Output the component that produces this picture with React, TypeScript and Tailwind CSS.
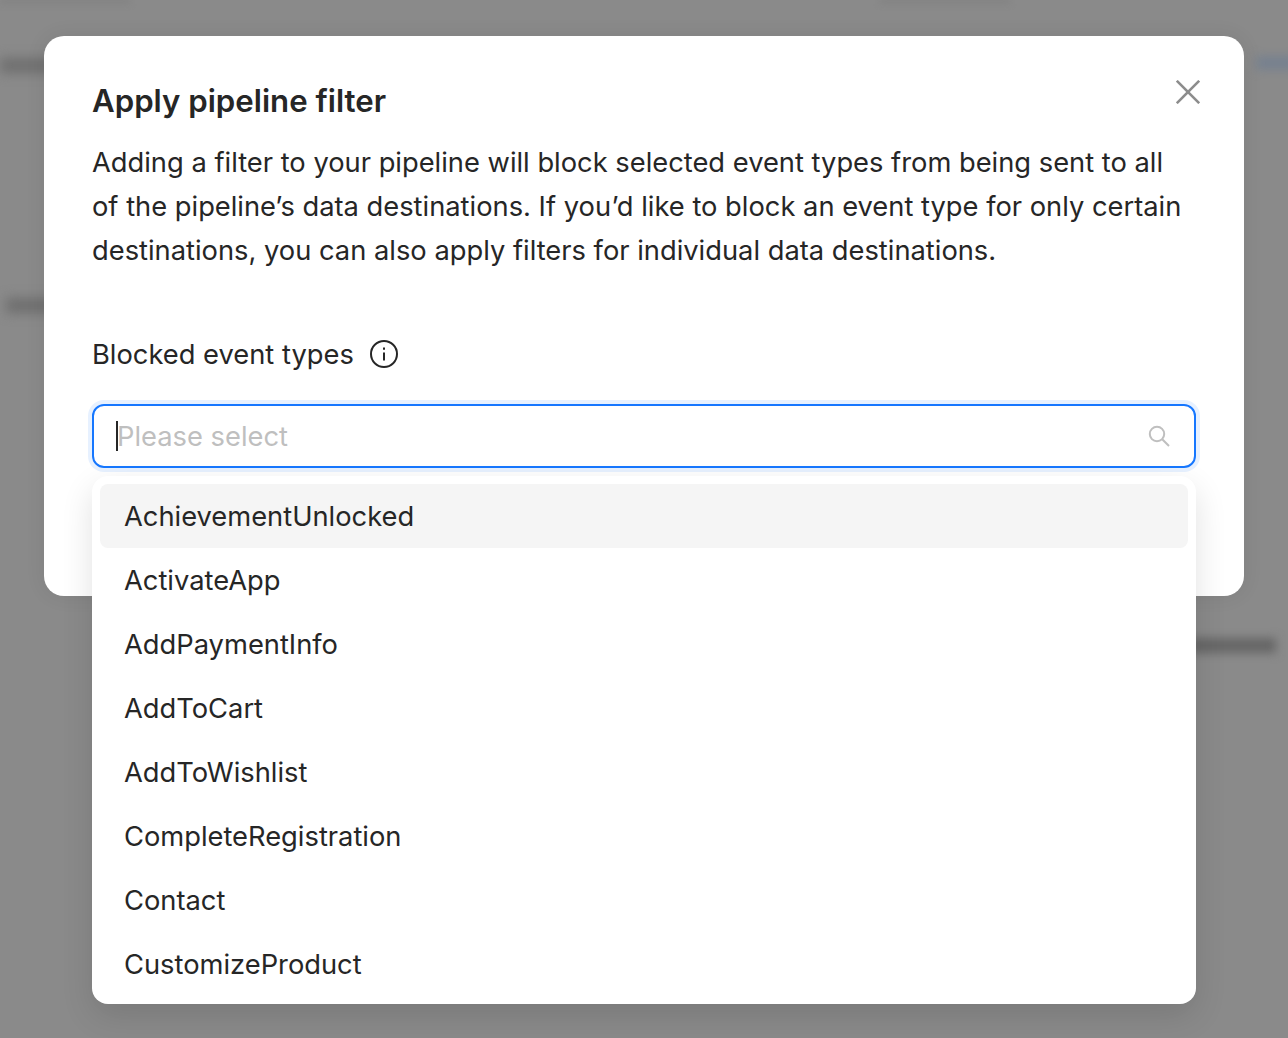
const OPTIONS = [
  "AchievementUnlocked",
  "ActivateApp",
  "AddPaymentInfo",
  "AddToCart",
  "AddToWishlist",
  "CompleteRegistration",
  "Contact",
  "CustomizeProduct",
];

function Backdrop() {
  return (
    <div className="absolute inset-0 overflow-hidden bg-[#8a8a8a]">
      <div className="absolute left-0 top-[58px] h-[15px] w-[60px] bg-[#6f6f6f] blur-[6px]" />
      <div className="absolute left-[6px] top-[298px] h-[15px] w-[60px] bg-[#6e6e6e] blur-[6px]" />
      <div className="absolute left-[1256px] top-[56px] h-[14px] w-[40px] bg-[#77818f] blur-[5px]" />
      <div className="absolute left-[1190px] top-[638px] h-[15px] w-[86px] bg-[#666666] blur-[5px]" />
      <div className="absolute left-0 top-0 h-[3px] w-[130px] bg-[#7e7e7e] blur-[3px]" />
      <div className="absolute left-[880px] top-0 h-[3px] w-[130px] bg-[#7e7e7e] blur-[3px]" />
    </div>
  );
}

function CloseIcon() {
  return (
    <svg width="24" height="24" viewBox="0 0 24 24" fill="none" stroke="#8c8c8c" strokeWidth="2.6">
      <path d="M0.8 0.8L23.2 23.2" />
      <path d="M23.2 0.8L0.8 23.2" />
    </svg>
  );
}

function InfoIcon() {
  return (
    <svg width="28" height="28" viewBox="0 0 28 28" fill="none" stroke="#262626" strokeWidth="2">
      <circle cx="14" cy="14" r="13" />
      <path d="M14 12.5v8" />
      <path d="M14 7.5v2.2" />
    </svg>
  );
}

function SearchIcon() {
  return (
    <svg width="22" height="22" viewBox="0 0 22 22" fill="none" stroke="#bfbfbf" strokeWidth="2">
      <circle cx="9" cy="9" r="7.2" />
      <path d="M14.2 14.2L21 21" />
    </svg>
  );
}

export default function App() {
  return (
    <div className="relative flex h-[1038px] justify-center overflow-hidden pt-[36px] font-['Inter',sans-serif] text-[#262626]">
      <Backdrop />
      <div className="relative h-[560px] w-[1200px] rounded-[20px] bg-white px-[48px] pt-[44px] shadow-[0_0_20px_rgba(0,0,0,0.08)]">
        <div className="flex items-start justify-between">
          <h2 className="pt-[1px] text-[31.2px] font-semibold leading-[40px]">Apply pipeline filter</h2>
          <button className="-mr-[4px]">
            <CloseIcon />
          </button>
        </div>
        <p className="mt-[20px] w-[1100px] text-[27.3px] leading-[44px]">
          Adding a filter to your pipeline will block selected event types from being sent to all of the pipeline’s data destinations. If you’d like to block an event type for only certain destinations, you can also apply filters for individual data destinations.
        </p>
        <div className="mt-[59px] flex h-[44px] items-center gap-[16px] text-[27.3px]">
          <span className="pt-[2px]">Blocked event types</span>
          <InfoIcon />
        </div>
        <div className="relative mt-[28px] w-[1104px]">
          <div className="flex h-[64px] items-center justify-between rounded-[12px] border-2 border-[#1677ff] pl-[22px] pr-[24px] shadow-[0_0_0_4px_rgba(22,119,255,0.1)]">
            <div className="flex items-center">
              <span className="h-[30px] w-[2px] bg-[#262626]" />
              <span className="-ml-[1px] pt-[2px] text-[27.3px] text-[#bfbfbf]">Please select</span>
            </div>
            <SearchIcon />
          </div>
          <div className="absolute left-0 top-[72px] w-full rounded-[16px] bg-white p-[8px] shadow-[0_12px_32px_rgba(0,0,0,0.12)]">
            {OPTIONS.map((o, i) => (
              <div
                key={o}
                className={`flex h-[64px] items-center rounded-[8px] px-[24px] pt-[2px] text-[27.3px] ${i === 0 ? "bg-[#f5f5f5]" : ""}`}
              >
                {o}
              </div>
            ))}
          </div>
        </div>
      </div>
    </div>
  );
}
